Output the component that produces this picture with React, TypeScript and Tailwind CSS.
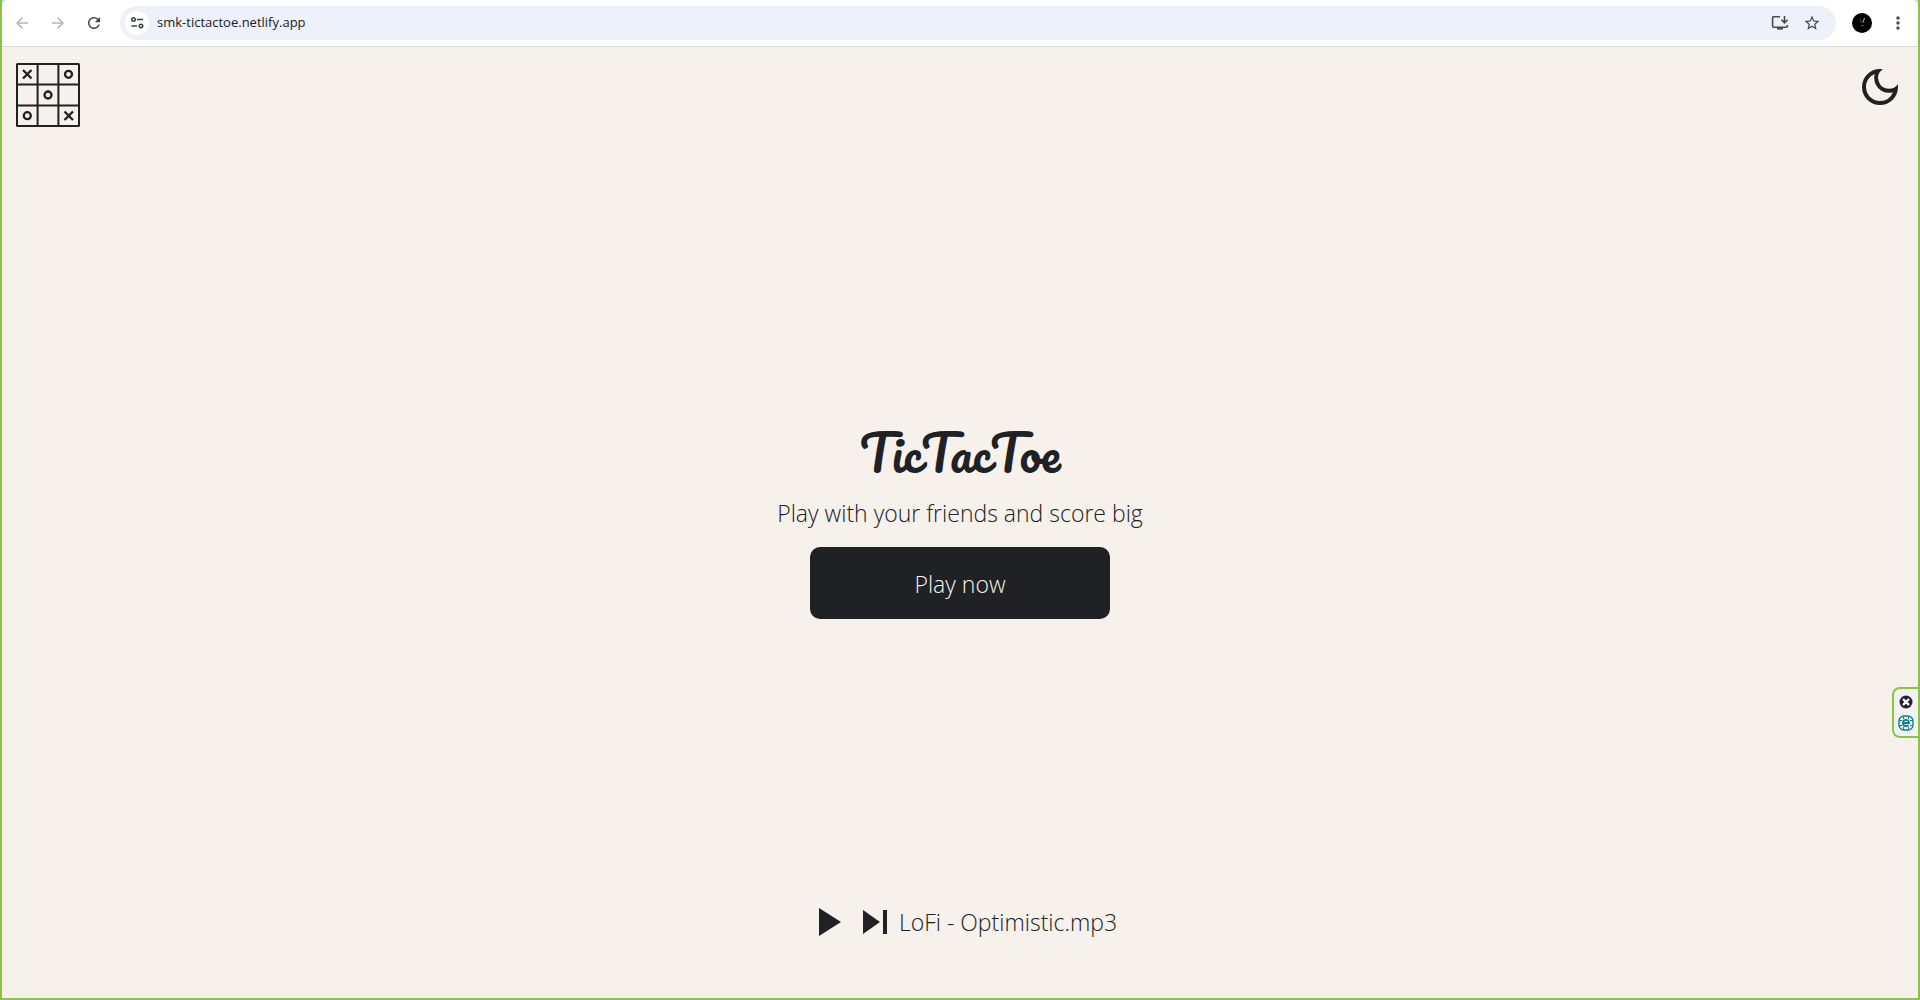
import { MdArrowBack, MdArrowForward, MdRefresh, MdStarOutline, MdMoreVert, MdOutlineDarkMode, MdPlayArrow, MdSkipNext } from "react-icons/md";

const chromeIcon = "flex size-8 items-center justify-center rounded-full";

function SiteInfoIcon() {
  return (
    <svg viewBox="0 0 16 16" className="size-4" fill="none" stroke="#3c4043" strokeWidth="1.6">
      <circle cx="4.500" cy="4.500" r="1.700" />
      <path d="M8 4.500h6M2.500 11h5.500" />
      <circle cx="12" cy="11" r="1.700" />
    </svg>
  );
}

function InstallIcon() {
  return (
    <svg viewBox="0 0 18 16" className="h-4 w-[18px]" fill="none" stroke="#474a4d" strokeWidth="1.6">
      <path d="M9 1.800H2.600a1 1 0 0 0-1 1v8.400a1 1 0 0 0 1 1h12.800a1 1 0 0 0 1-1V10" />
      <path d="M13.500 1v6.500M10.400 4.800l3.100 3.100 3.100-3.100" />
      <path d="M6 13.600h6" strokeWidth="2" />
    </svg>
  );
}

function BoardLogo() {
  return (
    <svg viewBox="0 0 64 64" className="size-16" fill="none" stroke="#202124" role="img" aria-label="TicTacToe board">
      <rect x="1" y="1" width="62" height="62" rx="0.5" strokeWidth="2" />
      <path d="M21.600 1v62M42.400 1v62M1 21.600h62M1 42.400h62" strokeWidth="2" />
      <path d="M7 7l8.500 8.500M15.500 7L7 15.500M48.500 48.500l8.500 8.500M57 48.500l-8.500 8.500" strokeWidth="2.300" />
      <circle cx="52.500" cy="11.300" r="3.500" strokeWidth="2.300" />
      <circle cx="32" cy="32" r="3.500" strokeWidth="2.300" />
      <circle cx="11.300" cy="52.700" r="3.500" strokeWidth="2.300" />
    </svg>
  );
}

function ProfilePicture() {
  return (
    <svg viewBox="0 0 20 20" className="size-5">
      <circle cx="10" cy="10" r="10" fill="#000" />
      <path d="M12.500 5L11 9.500" stroke="#bbb" strokeWidth="1" />
      <path d="M8.500 6v1.500M8 9h3M9 12.500h3" stroke="#666" strokeWidth="0.800" />
    </svg>
  );
}

function CloseIcon() {
  return (
    <svg viewBox="0 0 14 14" className="size-3.5">
      <circle cx="7" cy="7" r="6.500" fill="#23232f" />
      <path d="M4 4l6 6M10 4l-6 6" stroke="#fff" strokeWidth="2.400" />
    </svg>
  );
}

function GlobeIcon() {
  return (
    <svg viewBox="0 0 16 16" className="size-4" fill="none" stroke="#0b8291">
      <rect x="1" y="1" width="14" height="14" rx="5" strokeWidth="1.400" />
      <path d="M5.500 1v3M10.500 1v3M5.500 12v3M10.500 12v3M1 5.500h3M1 10.500h3M12 5.500h3M12 10.500h3" strokeWidth="1" />
      <path d="M5 8h6c0-4.200-6-4.200-6 0 0 3.600 4 3.700 5.600 2.100" strokeWidth="1.900" />
    </svg>
  );
}

function BrowserBar() {
  return (
    <div className="bg-[#c9defa]">
      <header className="flex h-[47px] items-center rounded-t-md border-b border-[#dadce0] bg-white px-1">
        <nav className="flex gap-1 text-lg text-[#b4b5b7]">
          <button aria-label="Back" className={chromeIcon}><MdArrowBack /></button>
          <button aria-label="Forward" className={chromeIcon}><MdArrowForward /></button>
          <button aria-label="Reload" className="flex size-8 items-center justify-center rounded-full text-[#474a4d]"><MdRefresh /></button>
        </nav>
        <div className="ml-2.5 flex h-[34px] grow items-center rounded-full bg-[#ecf1fa] pl-[5px] pr-2">
          <button aria-label="Site information" className="flex size-6 items-center justify-center rounded-full bg-white"><SiteInfoIcon /></button>
          <input aria-label="Address" defaultValue="smk-tictactoe.netlify.app" className="ml-2 min-w-0 grow bg-transparent text-[13px] font-normal text-[#202124] outline-none" />
          <button aria-label="Install app" className={chromeIcon}><InstallIcon /></button>
          <button aria-label="Bookmark this page" className="flex size-8 items-center justify-center text-lg text-[#474a4d]"><MdStarOutline /></button>
        </div>
        <button aria-label="Profile" className="ml-4"><ProfilePicture /></button>
        <button aria-label="Menu" className="ml-2.5 flex size-8 items-center justify-center text-xl text-[#474a4d]"><MdMoreVert /></button>
      </header>
    </div>
  );
}

export default function App() {
  return (
    <div className="relative flex min-h-screen flex-col border-x-2 border-b-2 border-[#8bc53f] bg-[#f6f1eb] font-['Open_Sans',sans-serif] text-[23px] font-light text-[#202124]">
      <BrowserBar />
      <div className="flex items-start justify-between px-3.5 pt-4">
        <BoardLogo />
        <button aria-label="Dark mode" className="text-5xl"><MdOutlineDarkMode /></button>
      </div>
      <main className="flex grow flex-col items-center justify-center pt-2">
        <h1 className="font-[Pacifico,cursive] text-5xl font-normal leading-[76px]">TicTacToe</h1>
        <p className="mt-1 leading-9">Play with your friends and score big</p>
        <button className="mt-4 h-[72px] w-[300px] rounded-[10px] bg-[#202124] pt-1 text-[#f6f1eb]">Play now</button>
      </main>
      <footer className="flex items-center justify-center pb-[52px]">
        <button aria-label="Play" className="text-5xl"><MdPlayArrow /></button>
        <button aria-label="Next track" className="text-5xl"><MdSkipNext /></button>
        <span>LoFi - Optimistic.mp3</span>
      </footer>
      <aside className="absolute right-0 top-[687px] flex h-[51px] w-[26px] flex-col items-center justify-center gap-1.5 rounded-l-lg border-y-2 border-l-2 border-[#8bc53f] bg-[#f2f2f2]">
        <button aria-label="Close"><CloseIcon /></button>
        <button aria-label="Open extension"><GlobeIcon /></button>
      </aside>
    </div>
  );
}
